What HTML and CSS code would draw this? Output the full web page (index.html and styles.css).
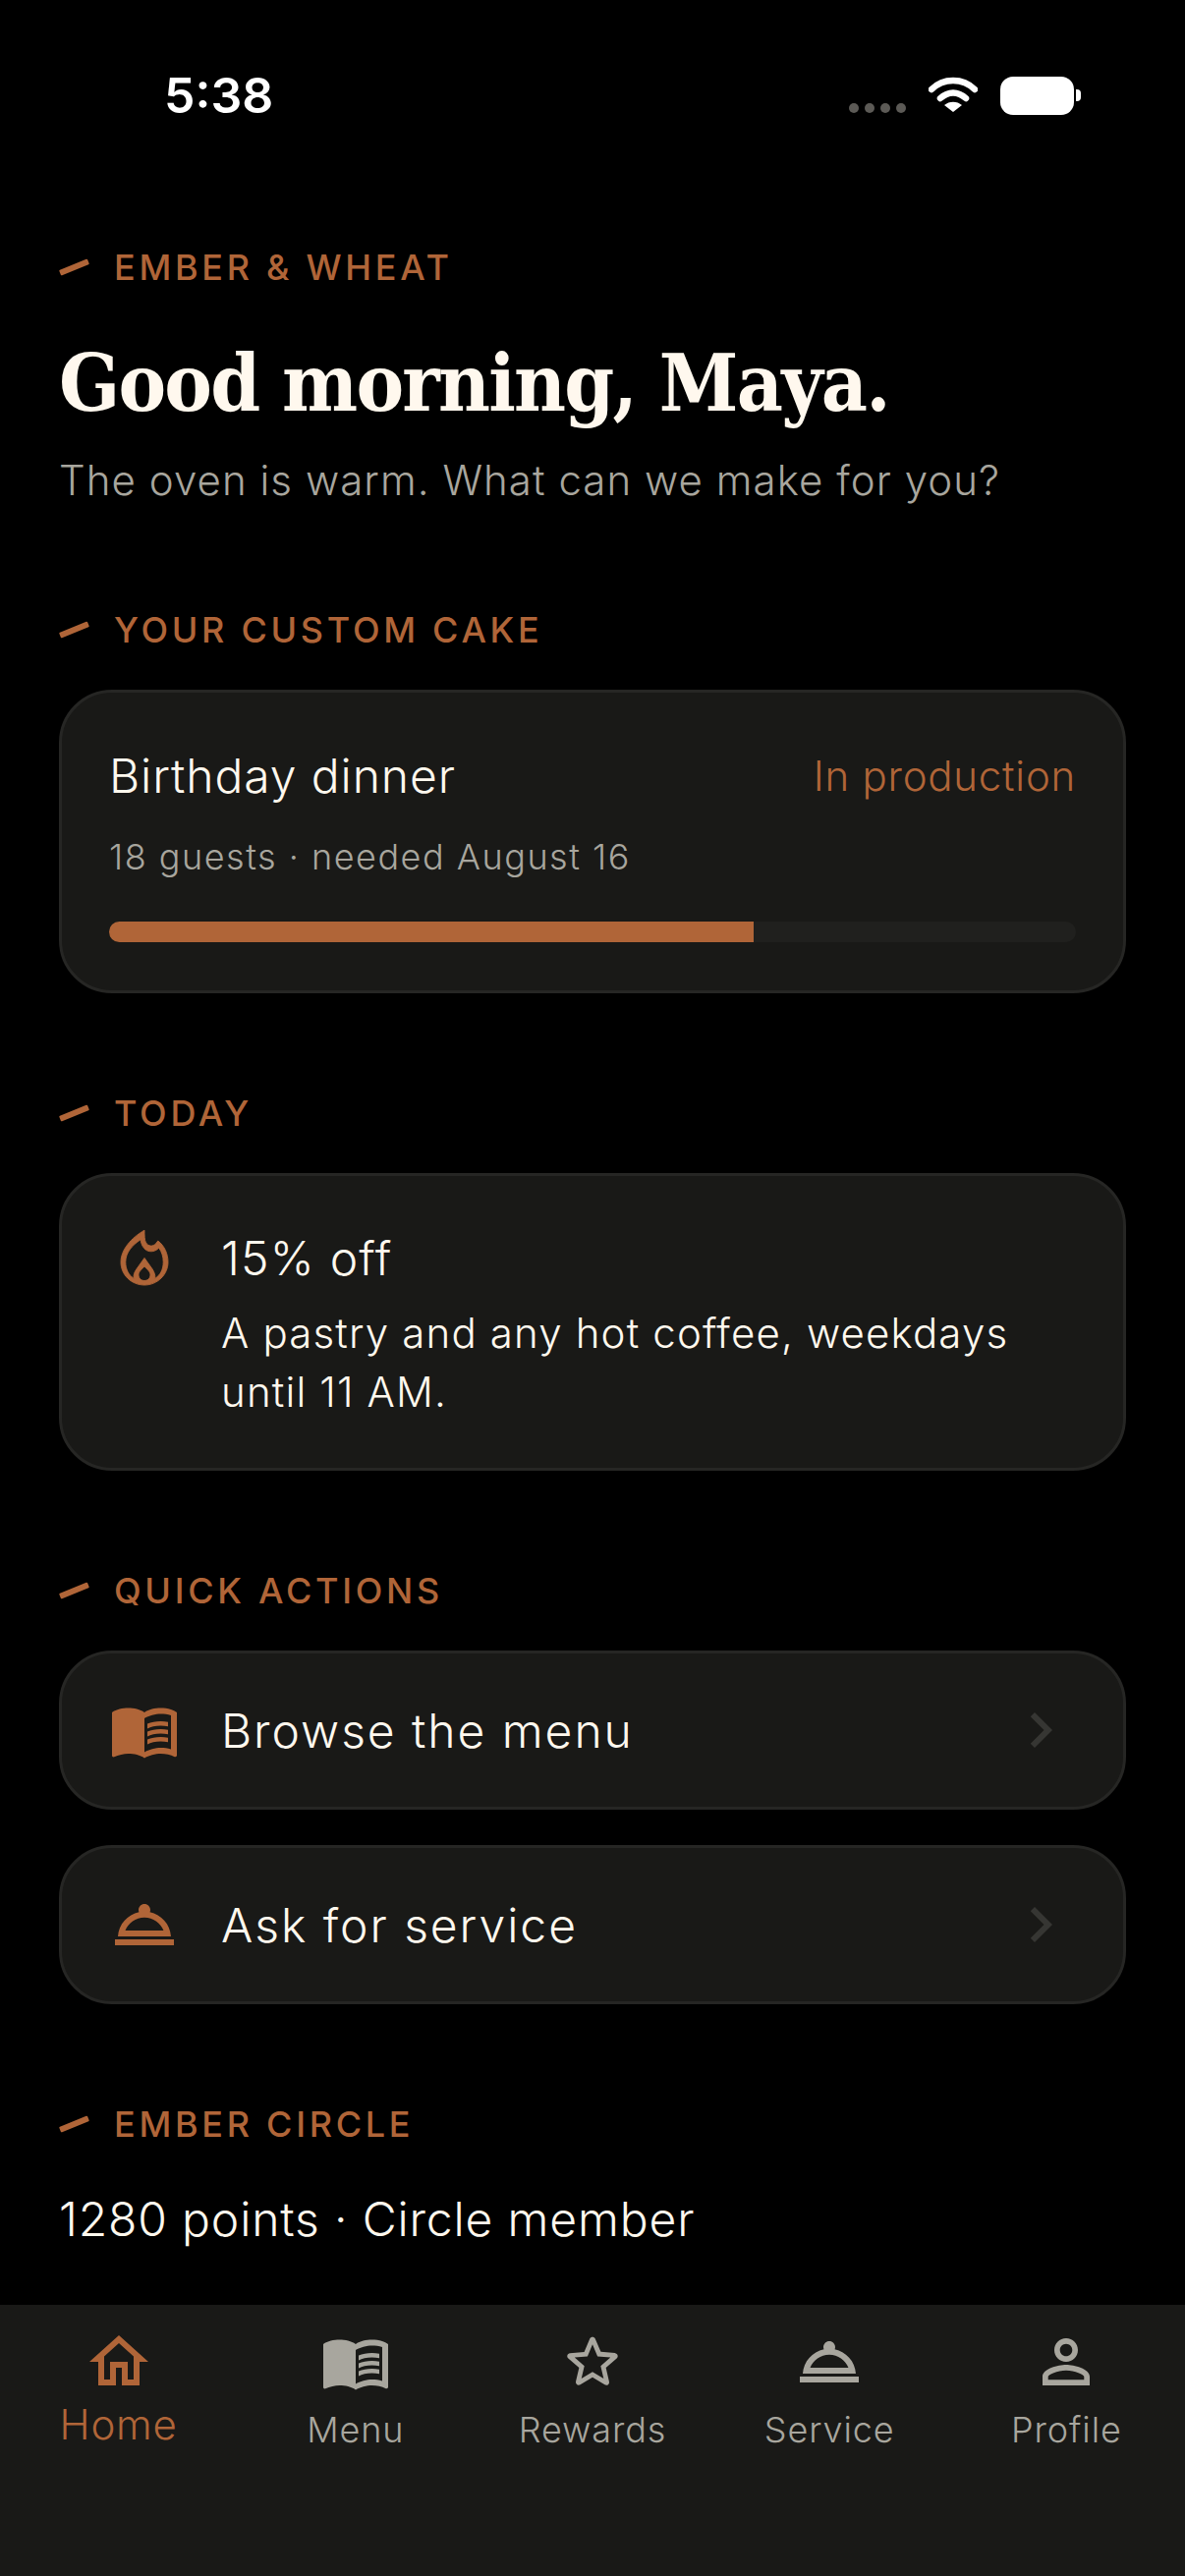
FILE: index.html
```html
<!DOCTYPE html>
<html lang="en">
<head>
    <meta charset="UTF-8">
    <meta name="viewport" content="width=device-width, initial-scale=1.0">
    <title>Ember &amp; Wheat</title>
    <link rel="stylesheet" href="styles.css">
</head>
<body>
    <div class="screen">
        <div class="status-bar">
            <span class="clock">5:38</span>
            <div class="status-icons">
                <div class="signal"><i></i><i></i><i></i><i></i></div>
                <svg class="wifi" viewBox="0 0 50 36" width="50" height="36">
                    <path d="M3 13 C15 1 35 1 47 13" fill="none" stroke="#fff" stroke-width="6.5" stroke-linecap="round"/>
                    <path d="M12 22 C20 14.500 30 14.500 38 22" fill="none" stroke="#fff" stroke-width="6.500" stroke-linecap="round"/>
                    <path d="M25 36 L16 29 C21 24.500 29 24.500 34 29 Z" fill="#fff"/>
                </svg>
                <div class="battery"></div>
            </div>
        </div>

        <main class="content">
            <div class="eyebrow"><span class="tick"></span>EMBER &amp; WHEAT</div>
            <h1>Good morning, Maya.</h1>
            <p class="lead">The oven is warm. What can we make for you?</p>

            <div class="eyebrow section"><span class="tick"></span>YOUR CUSTOM CAKE</div>
            <div class="card cake">
                <div class="cake-top">
                    <span class="cake-name">Birthday dinner</span>
                    <span class="cake-state">In production</span>
                </div>
                <p class="cake-meta">18 guests · needed August 16</p>
                <div class="progress"><div class="progress-fill"></div></div>
            </div>

            <div class="eyebrow section"><span class="tick"></span>TODAY</div>
            <div class="card offer">
                <svg class="icon accent flame" viewBox="0 0 24 24">
                    <path fill-rule="evenodd" d="M12 2.400C7.500 5 4 9 4 13.200 4 17.600 7.600 21 12 21s8-3.500 8-7.800c0-2.900-1.300-5.600-3.400-7.200l-.7.900c-1 1.100-2.600 1.100-3.400-.3C12 5.800 12 4 12 2.400zM10.700 5.600c.2 1.700.9 2.900 2 3.600 1.500.8 3.200.3 4.200-.8 1 1.300 1.500 3 1.500 4.800 0 2.500-1 4.400-2.800 5.600.1-1.300-.2-2-.9-3.200L12 11.800l-2.700 3.800c-.7 1.100-1.100 1.900-.9 3.200-1.800-1.200-2.800-3.200-2.800-5.600 0-3.200 2.200-5.700 5.100-7.600zM12 14.700c-1 1-2 1.800-2 2.900 0 1.100.9 1.900 2 1.900s2-.8 2-1.900c0-1.100-1-1.900-2-2.900z"/>
                </svg>
                <div>
                    <div class="offer-title">15% off</div>
                    <p class="offer-text">A pastry and any hot coffee, weekdays until 11 AM.</p>
                </div>
            </div>

            <div class="eyebrow section"><span class="tick"></span>QUICK ACTIONS</div>
            <div class="actions">
                <div class="card action">
                    <svg class="icon accent" viewBox="0 0 24 24">
                        <path d="M21 5c-1.110-.350-2.330-.500-3.500-.500-1.950 0-4.050.400-5.500 1.500-1.450-1.100-3.550-1.500-5.500-1.500S2.450 4.900 1 6v14.650c0 .250.250.500.500.500.100 0 .150-.050.250-.050C3.100 20.450 5.050 20 6.500 20c1.950 0 4.050.400 5.500 1.500 1.350-.850 3.800-1.500 5.500-1.500 1.650 0 3.350.300 4.750 1.050.100.050.150.050.250.050.250 0 .500-.250.500-.500V6c-.600-.450-1.250-.750-2-1zm0 13.500c-1.100-.350-2.300-.500-3.500-.500-1.700 0-4.150.650-5.500 1.500V8c1.350-.850 3.800-1.500 5.500-1.500 1.200 0 2.400.150 3.500.500v11.500z"/>
                        <path d="M17.500 10.500c.880 0 1.730.090 2.500.260V9.240C19.210 9.090 18.360 9 17.500 9c-1.700 0-3.240.290-4.500.830v1.660c1.130-.640 2.700-.990 4.500-.990zM13 12.490v1.660c1.130-.640 2.700-.990 4.500-.990.880 0 1.730.090 2.500.260V11.900c-.790-.150-1.640-.240-2.500-.240-1.700 0-3.240.300-4.500.830zM17.500 14.330c-1.700 0-3.240.290-4.500.830v1.660c1.130-.640 2.700-.990 4.500-.990.880 0 1.730.090 2.500.260v-1.520c-.790-.160-1.640-.240-2.500-.240z"/>
                    </svg>
                    <span class="action-label">Browse the menu</span>
                    <svg class="icon chevron" viewBox="0 0 24 24"><path d="M10 6L8.590 7.410 13.170 12l-4.580 4.590L10 18l6-6z"/></svg>
                </div>
                <div class="card action">
                    <svg class="icon accent" viewBox="0 0 24 24">
                        <path d="M2 17h20v2H2v-2zm11.840-9.210c.100-.240.160-.510.160-.790 0-1.100-.900-2-2-2s-2 .900-2 2c0 .280.060.550.160.790C6.250 8.600 3.270 11.930 3 16h18c-.270-4.070-3.250-7.400-7.160-8.210zM12 9.580c2.950 0 5.470 1.830 6.500 4.420h-13c1.030-2.590 3.550-4.420 6.500-4.420z"/>
                    </svg>
                    <span class="action-label">Ask for service</span>
                    <svg class="icon chevron" viewBox="0 0 24 24"><path d="M10 6L8.590 7.410 13.170 12l-4.580 4.590L10 18l6-6z"/></svg>
                </div>
            </div>

            <div class="eyebrow section"><span class="tick"></span>EMBER CIRCLE</div>
            <p class="points">1280 points · Circle member</p>
        </main>

        <nav class="tabbar">
            <div class="tab active">
                <svg class="icon" viewBox="0 0 24 24"><path d="M12 5.690l5 4.500V18h-2v-6H9v6H7v-7.810l5-4.500M12 3L2 12h3v8h6v-6h2v6h6v-8h3L12 3z"/></svg>
                <span>Home</span>
            </div>
            <div class="tab">
                <svg class="icon" viewBox="0 0 24 24">
                    <path d="M21 5c-1.110-.350-2.330-.500-3.500-.500-1.950 0-4.050.400-5.500 1.500-1.450-1.100-3.550-1.500-5.500-1.500S2.450 4.900 1 6v14.650c0 .250.250.500.500.500.100 0 .150-.050.250-.050C3.100 20.450 5.050 20 6.500 20c1.950 0 4.050.400 5.500 1.500 1.350-.850 3.800-1.500 5.500-1.500 1.650 0 3.350.300 4.750 1.050.100.050.150.050.250.050.250 0 .500-.250.500-.500V6c-.600-.450-1.250-.750-2-1zm0 13.500c-1.100-.350-2.300-.500-3.500-.500-1.700 0-4.150.650-5.500 1.500V8c1.350-.850 3.800-1.500 5.500-1.500 1.200 0 2.400.150 3.500.500v11.500z"/>
                    <path d="M17.500 10.500c.880 0 1.730.090 2.500.260V9.240C19.210 9.090 18.360 9 17.500 9c-1.700 0-3.240.290-4.500.830v1.660c1.130-.640 2.700-.990 4.500-.990zM13 12.490v1.660c1.130-.640 2.700-.990 4.500-.990.880 0 1.730.090 2.500.260V11.900c-.790-.150-1.640-.240-2.500-.240-1.700 0-3.240.300-4.500.830zM17.500 14.330c-1.700 0-3.240.290-4.500.830v1.660c1.130-.640 2.700-.990 4.500-.990.880 0 1.730.090 2.500.260v-1.520c-.790-.160-1.640-.240-2.500-.240z"/>
                </svg>
                <span>Menu</span>
            </div>
            <div class="tab">
                <svg class="icon" viewBox="0 0 24 24"><path d="M19.650 9.040l-4.840-.420-1.890-4.450c-.340-.810-1.500-.810-1.840 0L9.190 8.630l-4.840.420c-.880.070-1.240 1.170-.570 1.750l3.670 3.180-1.100 4.720c-.200.860.730 1.540 1.490 1.080l4.160-2.500 4.160 2.510c.760.460 1.690-.220 1.490-1.080l-1.100-4.730 3.670-3.180c.670-.580.320-1.680-.560-1.750zM12 15.400l-3.760 2.270 1-4.280-3.320-2.880 4.380-.380L12 6.100l1.710 4.040 4.380.380-3.320 2.880 1 4.280L12 15.400z"/></svg>
                <span>Rewards</span>
            </div>
            <div class="tab">
                <svg class="icon" viewBox="0 0 24 24"><path d="M2 17h20v2H2v-2zm11.840-9.210c.100-.240.160-.510.160-.790 0-1.100-.900-2-2-2s-2 .900-2 2c0 .280.060.550.160.790C6.250 8.600 3.270 11.930 3 16h18c-.270-4.070-3.250-7.400-7.160-8.210zM12 9.580c2.950 0 5.470 1.830 6.500 4.420h-13c1.030-2.590 3.550-4.420 6.500-4.420z"/></svg>
                <span>Service</span>
            </div>
            <div class="tab">
                <svg class="icon" viewBox="0 0 24 24"><path d="M12 5.900c1.160 0 2.100.940 2.100 2.100s-.940 2.100-2.100 2.100S9.900 9.160 9.900 8s.940-2.100 2.100-2.100m0 9c2.970 0 6.100 1.460 6.100 2.100v1.100H5.900V17c0-.640 3.130-2.100 6.100-2.100M12 4C9.790 4 8 5.790 8 8s1.790 4 4 4 4-1.790 4-4-1.790-4-4-4zm0 9c-2.670 0-8 1.340-8 4v3h16v-3c0-2.660-5.330-4-8-4z"/></svg>
                <span>Profile</span>
            </div>
        </nav>
    </div>
</body>
</html>
```
FILE: styles.css
```css
* {
    box-sizing: border-box;
}

body {
    margin: 0;
    background-color: #000;
    font-family: Inter, "Noto Sans", sans-serif;
    font-weight: 300;
    color: #fff8ee;
}

p,
h1 {
    margin: 0;
}

.screen {
    width: 1206px;
    height: 2622px;
    display: flex;
    flex-direction: column;
    overflow: hidden;
}

/* status bar */
.status-bar {
    height: 194px;
    padding: 0 113px 0 167px;
    display: flex;
    justify-content: space-between;
    align-items: center;
}

.clock {
    font-size: 50px;
    font-weight: 600;
    color: #fff;
}

.status-icons {
    display: flex;
    align-items: flex-start;
    gap: 23px;
}

.signal {
    display: flex;
    gap: 6px;
    margin-top: 27px;
}

.signal i {
    width: 10px;
    height: 10px;
    border-radius: 50%;
    background-color: #5c5a56;
}

.battery {
    position: relative;
    width: 75px;
    height: 39px;
    border-radius: 13px;
    background-color: #fff;
}

.battery::after {
    content: "";
    position: absolute;
    left: 77px;
    top: 13px;
    width: 5px;
    height: 12px;
    border-radius: 0 4px 4px 0;
    background-color: #fff;
}

/* page */
.content {
    flex: 1;
    padding: 56px 60px 0;
}

.eyebrow {
    display: flex;
    align-items: center;
    gap: 25px;
    height: 44px;
    font-size: 36px;
    font-weight: 500;
    letter-spacing: 3.7px;
    color: #b06538;
}

.eyebrow.section {
    margin-top: 100px;
    margin-bottom: 39px;
}

.tick {
    width: 31px;
    height: 6px;
    border-radius: 1px;
    background-color: #b06538;
    transform: rotate(-22deg);
}

h1 {
    margin-top: 46px;
    font-family: "DejaVu Serif Condensed", "Liberation Serif", serif;
    font-size: 81px;
    font-weight: 700;
    line-height: 100px;
    letter-spacing: -1.75px;
    color: #fff8ee;
}

.lead {
    margin-top: 19px;
    font-size: 42px;
    line-height: 60px;
    letter-spacing: 1.05px;
    color: #a8a69e;
}

.card {
    border: 3px solid #262624;
    border-radius: 54px;
    background-color: #191917;
}

.cake {
    height: 309px;
    padding: 47px 48px;
}

.cake-top {
    display: flex;
    justify-content: space-between;
    align-items: center;
    height: 74px;
}

.cake-name {
    font-size: 48px;
    letter-spacing: .9px;
}

.cake-state {
    font-size: 42px;
    letter-spacing: .75px;
    color: #b06538;
}

.cake-meta {
    margin-top: 21px;
    font-size: 36px;
    line-height: 50px;
    letter-spacing: 1.5px;
    color: #a8a69e;
}

.progress {
    height: 21px;
    margin-top: 41px;
    border-radius: 11px;
    background-color: #20201e;
    overflow: hidden;
}

.progress-fill {
    width: 66.7%;
    height: 100%;
    background-color: #b06538;
}

.icon {
    width: 72px;
    height: 72px;
    flex-shrink: 0;
    fill: currentColor;
}

.flame {
    stroke: currentColor;
    stroke-width: .3;
}

.accent {
    color: #b06538;
}

.chevron {
    color: #363633;
}

.offer {
    height: 303px;
    padding: 48px 48px;
    display: flex;
    align-items: flex-start;
    gap: 42px;
}

.offer-title {
    font-size: 48px;
    line-height: 72px;
    letter-spacing: 1.2px;
}

.offer-text {
    margin-top: 10px;
    font-size: 42px;
    line-height: 60px;
    letter-spacing: 1.15px;
}

.actions {
    display: flex;
    flex-direction: column;
    gap: 36px;
}

.action {
    height: 162px;
    padding: 0 48px;
    display: flex;
    align-items: center;
    gap: 42px;
}

.action-label {
    flex: 1;
    font-size: 48px;
    letter-spacing: 1.95px;
}

.points {
    margin-top: 45px;
    font-size: 48px;
    line-height: 60px;
    letter-spacing: .85px;
}

/* tab bar */
.tabbar {
    height: 276px;
    padding-top: 22px;
    display: grid;
    grid-template-columns: repeat(5, 1fr);
    background-color: #191917;
}

.tab {
    display: flex;
    flex-direction: column;
    align-items: center;
    color: #a8a69e;
    font-size: 36px;
    line-height: 44px;
    letter-spacing: .9px;
}

.tab span {
    margin-top: 11px;
}

.tab.active {
    color: #b06538;
    font-size: 42px;
    letter-spacing: .8px;
}

.tab.active span {
    margin-top: 6px;
}
```
